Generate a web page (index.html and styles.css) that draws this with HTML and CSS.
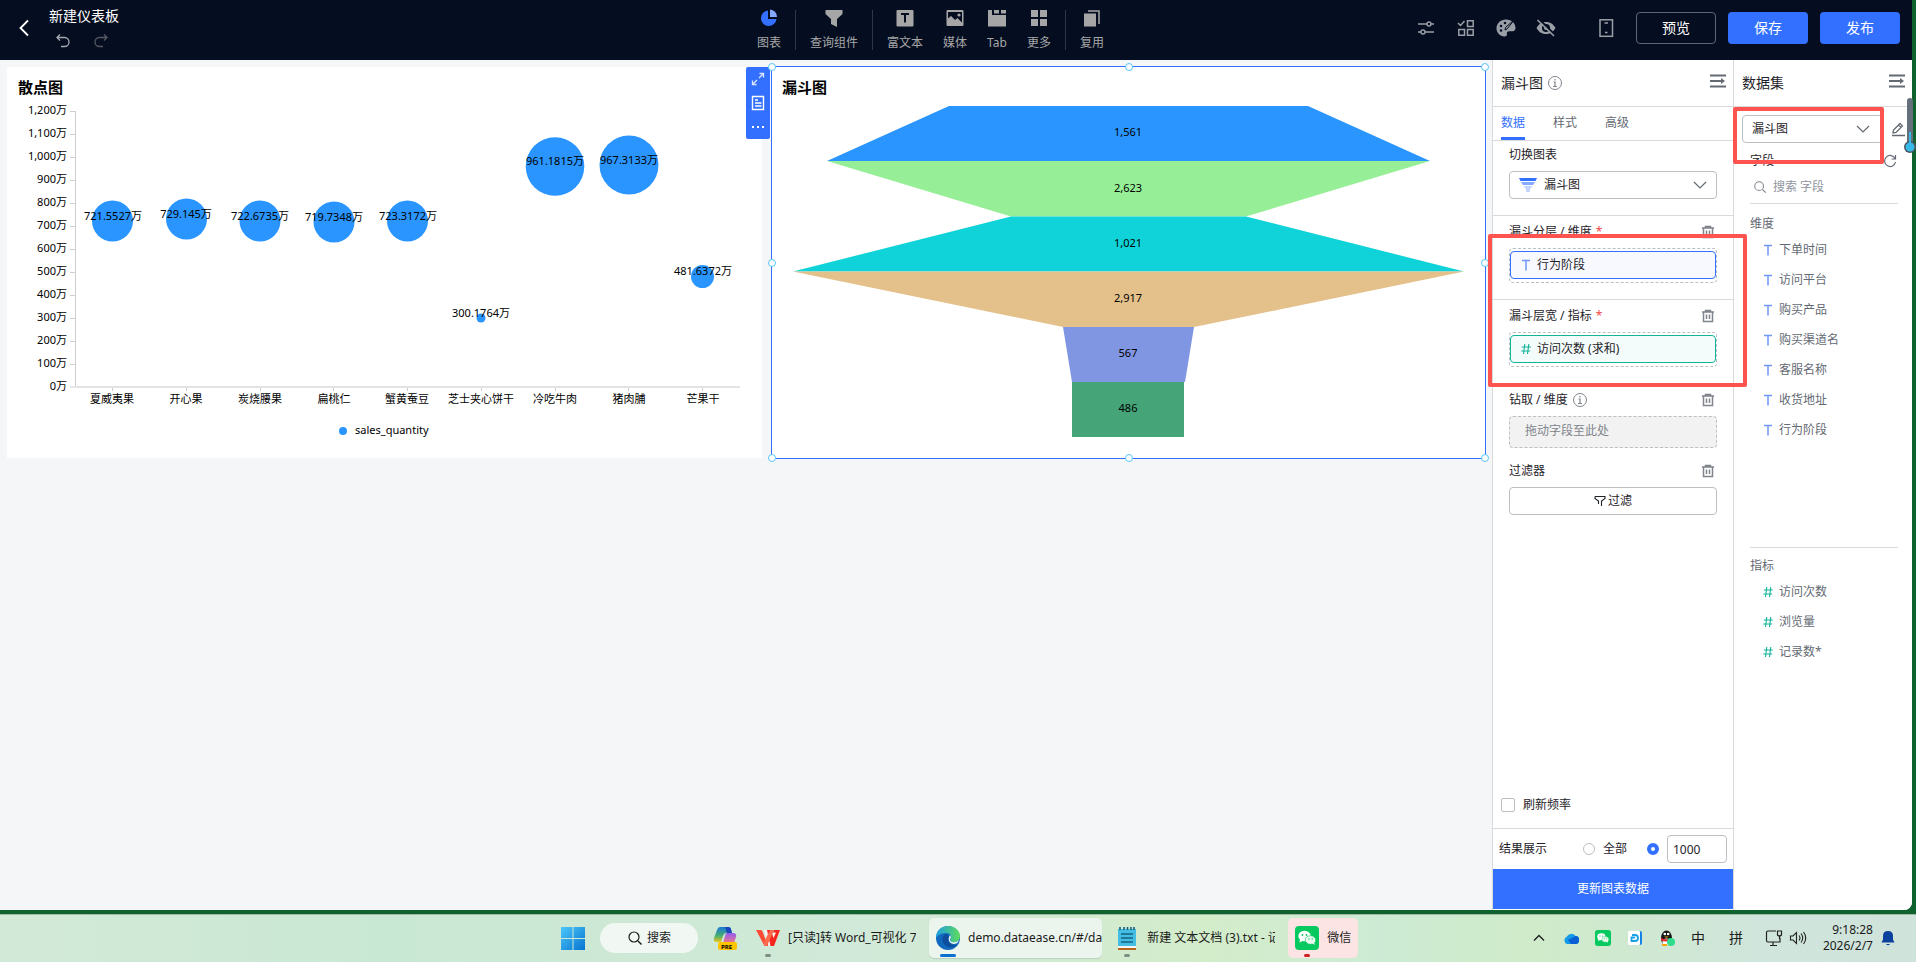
FILE: index.html
```html
<!DOCTYPE html>
<html lang="zh-cn">

<head>
    <meta charset="UTF-8">
    <meta name="viewport" content="width=device-width, initial-scale=1.0">
    <title>新建仪表板</title>
    <link rel="stylesheet" href="styles.css">
</head>

<body>
    <!-- 公用图标 -->
    <svg class="sprite">
        <symbol id="trash" viewBox="0 0 14 14"><path d="M1 3h12M4.500 2.500V1.500h5v1M2.500 3v9.500h9V3M5.500 5.500v4.500M8.500 5.500v4.500" fill="none" stroke="#80848c" stroke-width="1.500"/></symbol>
        <symbol id="fold" viewBox="0 0 16 14"><path d="M0 1.500h16M0 7h11M0 12.500h16" fill="none" stroke="#646a73" stroke-width="2"/><path d="M11 4l4 3-4 3z" fill="#646a73"/></symbol>
        <symbol id="info" viewBox="0 0 16 16"><circle cx="8" cy="8" r="6.500" fill="none" stroke="#80848c"/><path d="M8 4v1.500M6.500 7H8v4.500M6 11.500h4" fill="none" stroke="#80848c" stroke-width="1.200"/></symbol>
        <symbol id="arrow" viewBox="0 0 14 14"><path d="M1 4l6 6 6-6" fill="none" stroke="#646a73" stroke-width="1.200"/></symbol>
        <symbol id="text-field" viewBox="0 0 10 12"><path d="M1 1.500h8M5 1.500v10" fill="none" stroke="#6f96fb" stroke-width="1.500"/></symbol>
        <symbol id="num-field" viewBox="0 0 10 12"><path d="M3.800 1L2.500 11M7.800 1L6.500 11M.8 4h9M.2 8h9" fill="none" stroke="#10b39a" stroke-width="1.100"/></symbol>
        <symbol id="search" viewBox="0 0 16 16"><circle cx="7" cy="7" r="5" fill="none" stroke="currentColor" stroke-width="1.200"/><path d="M11 11l3.500 3.500" stroke="currentColor" stroke-width="1.400"/></symbol>
        <symbol id="wechat" viewBox="0 0 24 24"><rect width="24" height="24" rx="4" fill="#07c95f"/><ellipse cx="9.500" cy="10" rx="6.200" ry="5.200" fill="#fff"/><path d="M5 13l-.5 3.500 4-2z" fill="#fff"/><ellipse cx="15.500" cy="14" rx="5.200" ry="4.300" fill="#e9faef" stroke="#07c95f" stroke-width=".6"/><path d="M17 17l2.500 2-.2-3.500z" fill="#e9faef"/><circle cx="7.500" cy="9" r=".9" fill="#07c95f"/><circle cx="11.500" cy="9" r=".9" fill="#07c95f"/><circle cx="14" cy="13" r=".7" fill="#07c95f"/><circle cx="17.200" cy="13" r=".7" fill="#07c95f"/></symbol>
    </svg>

    <div class="app">
        <header class="header">
            <div class="header-left">
                <button class="back" aria-label="返回">
                    <svg width="10" height="18" viewBox="0 0 10 18"><path d="M9 1.500L1.500 9 9 16.500" fill="none" stroke="#fff" stroke-width="1.800"/></svg>
                </button>
                <div class="name">
                    <h1>新建仪表板</h1>
                    <div class="history">
                        <button aria-label="撤销"><svg width="16" height="16" viewBox="0 0 16 16"><path d="M5 1.500L2 4.500l3 3M2 4.500h7.500a4.500 4.500 0 0 1 0 9H6" fill="none" stroke="#a6a9b0" stroke-width="1.300"/></svg></button>
                        <button aria-label="重做"><svg width="16" height="16" viewBox="0 0 16 16"><path d="M11 1.500l3 3-3 3M14 4.500H6.500a4.500 4.500 0 0 0 0 9H10" fill="none" stroke="#55585f" stroke-width="1.300"/></svg></button>
                    </div>
                </div>
            </div>
            <nav class="tools">
                <button class="tool">
                    <svg viewBox="0 0 18 18"><path d="M8 1.500A7.800 7.800 0 1 0 16.500 10H8z" fill="#3370ff"/><path d="M10 .5A7.500 7.500 0 0 1 17 8h-7z" fill="#85a9ff"/></svg>
                    <span>图表</span>
                </button>
                <i class="split"></i>
                <button class="tool">
                    <svg viewBox="0 0 18 18"><path d="M.5 1h17v4L12 10v8l-6-3v-5L.5 5z" fill="#a6a6a6"/></svg>
                    <span>查询组件</span>
                </button>
                <i class="split"></i>
                <button class="tool">
                    <svg viewBox="0 0 18 18"><rect x=".5" y="1" width="17" height="16.500" rx="1" fill="#a6a6a6"/><path d="M5 5h8M9 5v8.500" stroke="#050e21" stroke-width="2"/></svg>
                    <span>富文本</span>
                </button>
                <button class="tool">
                    <svg viewBox="0 0 18 18"><rect x=".5" y="1" width="17" height="16" rx="1" fill="#a6a6a6"/><path d="M2 14V9.500l3-2.500 4 4 2.500-2 4.500 5V3H2z" fill="#050e21"/><path d="M2 15l0-5 3-2.500 4 4 2.500-1.800 4.500 4V15z" fill="#a6a6a6"/><circle cx="13" cy="6" r="1.600" fill="#a6a6a6"/></svg>
                    <span>媒体</span>
                </button>
                <button class="tool">
                    <svg viewBox="0 0 18 18"><path d="M0 1h4v5h14v11.500H0zM6 1h5v3.500H6zM13 1h5v3.500h-5z" fill="#a6a6a6"/></svg>
                    <span>Tab</span>
                </button>
                <button class="tool">
                    <svg viewBox="0 0 18 18"><path d="M1 1h7v7H1zM10 1h7v7h-7zM1 10h7v7H1zM10 10h7v7h-7z" fill="#a6a6a6"/></svg>
                    <span>更多</span>
                </button>
                <i class="split"></i>
                <button class="tool">
                    <svg viewBox="0 0 18 18"><path d="M1 4.500h12V17.500H1z" fill="#a6a6a6"/><path d="M5 2h11v13" fill="none" stroke="#a6a6a6" stroke-width="1.500"/></svg>
                    <span>复用</span>
                </button>
            </nav>
            <div class="header-right">
                <button class="icon-btn" aria-label="参数"><svg width="20" height="20" viewBox="0 0 20 20"><path d="M2 6h9M15 6h3M2 14h3M9 14h9" stroke="#9a9ea6" stroke-width="1.500"/><circle cx="13" cy="6" r="2" fill="none" stroke="#9a9ea6" stroke-width="1.400"/><circle cx="7" cy="14" r="2" fill="none" stroke="#9a9ea6" stroke-width="1.400"/></svg></button>
                <button class="icon-btn" aria-label="批量操作"><svg width="20" height="20" viewBox="0 0 20 20"><path d="M2 5l2.500 2.500L8.500 3M11.500 2.800h5.700v5.700h-5.700zM2.800 11.500h5.700v5.700H2.800zM11.500 11.500h5.700v5.700h-5.700z" fill="none" stroke="#9a9ea6" stroke-width="1.500"/></svg></button>
                <button class="icon-btn" aria-label="仪表板配置"><svg width="20" height="20" viewBox="0 0 20 20"><path d="M10 1.500C4.500 1.500.5 5.500.5 10.300c0 4.500 3.500 8.200 8 8.200 2 0 2.700-1 2.400-2.500-.3-1.700.4-2.700 2.300-2.700h3.300c2 0 3-1.500 3-3.300 0-5-4.300-8.500-9.500-8.500z" fill="#9a9ea6"/><g fill="#050e21"><circle cx="5" cy="8" r="1.300"/><circle cx="9" cy="5" r="1.300"/><circle cx="5" cy="12.500" r="1.300"/></g><path d="M19 1l-8 10-2 1 .5-2.500z" fill="#9a9ea6" stroke="#050e21"/></svg></button>
                <button class="icon-btn" aria-label="隐藏"><svg width="20" height="20" viewBox="0 0 20 20"><path d="M.5 10C3 5.500 6.500 4 10 4s7 1.500 9.500 6c-2.500 4.500-6 6-9.500 6S3 14.500.5 10z" fill="#9a9ea6"/><circle cx="10" cy="10" r="4" fill="#050e21"/><circle cx="10" cy="10" r="2" fill="#9a9ea6"/><path d="M3 1l16 16" stroke="#050e21" stroke-width="2"/><path d="M1.500 2l16.500 16" stroke="#9a9ea6" stroke-width="1.600"/></svg></button>
                <button class="icon-btn phone" aria-label="移动端"><svg width="20" height="20" viewBox="0 0 20 20"><rect x="4" y="1.800" width="12.500" height="16.500" fill="none" stroke="#9a9ea6" stroke-width="1.500"/><path d="M8.500 5h3.500M9 14.500h2.500" stroke="#9a9ea6" stroke-width="1.500"/></svg></button>
                <button class="btn plain">预览</button>
                <button class="btn">保存</button>
                <button class="btn">发布</button>
            </div>
        </header>

        <div class="main">
            <main class="canvas">
                <section class="card">
                    <h2>散点图</h2>
                    <svg class="chart" viewBox="0 0 755 359">
                        <g stroke="#cfcfcf">
                            <path d="M68.500 12v276M63 12.500h5M63 35.500h5M63 58.500h5M63 81.500h5M63 104.500h5M63 127.500h5M63 150.500h5M63 173.500h5M63 196.500h5M63 219.500h5M63 242.500h5M63 265.500h5M63 288h5" fill="none"/>
                            <path d="M105.500 288v4M179.500 288v4M253.500 288v4M326.500 288v4M400.500 288v4M474.500 288v4M548.500 288v4M621.500 288v4M695.500 288v4" fill="none"/>
                        </g>
                        <path d="M68 288h665" stroke="#e3e3e3" stroke-width="2"/>
                        <g text-anchor="end">
                            <text x="60" y="15">1,200万</text>
                            <text x="60" y="38">1,100万</text>
                            <text x="60" y="61">1,000万</text>
                            <text x="60" y="84">900万</text>
                            <text x="60" y="107">800万</text>
                            <text x="60" y="130">700万</text>
                            <text x="60" y="153">600万</text>
                            <text x="60" y="176">500万</text>
                            <text x="60" y="199">400万</text>
                            <text x="60" y="222">300万</text>
                            <text x="60" y="245">200万</text>
                            <text x="60" y="268">100万</text>
                            <text x="60" y="291">0万</text>
                        </g>
                        <g fill="#2a95ff">
                            <circle cx="105.500" cy="122" r="20.500"/>
                            <circle cx="179.500" cy="120" r="20.500"/>
                            <circle cx="253" cy="122" r="20.500"/>
                            <circle cx="327" cy="123" r="20.500"/>
                            <circle cx="400.500" cy="122" r="20.500"/>
                            <circle cx="474" cy="219" r="4.500"/>
                            <circle cx="548" cy="67.500" r="29.300"/>
                            <circle cx="622" cy="66" r="29.500"/>
                            <circle cx="695.500" cy="177.500" r="11.500"/>
                        </g>
                        <g text-anchor="middle">
                            <text x="106" y="121">721.5527万</text>
                            <text x="179" y="119">729.145万</text>
                            <text x="253" y="121">722.6735万</text>
                            <text x="327" y="122">719.7348万</text>
                            <text x="401" y="121">723.3172万</text>
                            <text x="474" y="218">300.1764万</text>
                            <text x="548" y="66">961.1815万</text>
                            <text x="622" y="65">967.3133万</text>
                            <text x="696" y="176">481.6372万</text>
                            <text x="105" y="304">夏威夷果</text>
                            <text x="179" y="304">开心果</text>
                            <text x="253" y="304">炭烧腰果</text>
                            <text x="327" y="304">扁桃仁</text>
                            <text x="400" y="304">蟹黄蚕豆</text>
                            <text x="474" y="304">芝士夹心饼干</text>
                            <text x="548" y="304">冷吃牛肉</text>
                            <text x="622" y="304">猪肉脯</text>
                            <text x="696" y="304">芒果干</text>
                        </g>
                        <circle cx="336" cy="332" r="4" fill="#2a95ff"/>
                        <text x="348" y="335">sales_quantity</text>
                    </svg>
                </section>

                <section class="card selected">
                    <h2>漏斗图</h2>
                    <svg class="chart" viewBox="0 0 713 359">
                        <path d="M177 7h359l122 55H55z" fill="#2a95ff"/>
                        <path d="M55 62h603l-184 55.500H239z" fill="#96ef96"/>
                        <path d="M239 117.500h235l218 55H21z" fill="#0fd3d8"/>
                        <path d="M21 172.500h671l-270 55.500H291z" fill="#e4c08b"/>
                        <path d="M291 228h131l-9 55H300z" fill="#8096e2"/>
                        <path d="M300 283h112v55H300z" fill="#45a578"/>
                        <g text-anchor="middle">
                            <text x="356" y="37">1,561</text>
                            <text x="356" y="93">2,623</text>
                            <text x="356" y="148">1,021</text>
                            <text x="356" y="203">2,917</text>
                            <text x="356" y="258">567</text>
                            <text x="356" y="313">486</text>
                        </g>
                    </svg>
                    <div class="card-bar">
                        <button aria-label="放大"><svg width="14" height="14" viewBox="0 0 14 14"><path d="M8.500 1.500h4v4M12.500 1.500l-4.500 4.500M5.500 12.500h-4v-4M1.500 12.500L6 8" fill="none" stroke="#dbe5ff" stroke-width="1.300"/></svg></button>
                        <button aria-label="查看数据"><svg width="14" height="16" viewBox="0 0 14 16"><path d="M1.500 1.500h11v13h-11zM4 5h3M4 8h6.500M4 11h6.500" fill="none" stroke="#fff" stroke-width="1.400"/></svg></button>
                        <button aria-label="更多"><svg width="14" height="14" viewBox="0 0 14 14"><path d="M1 6h2v2H1zM6 6h2v2H6zM11 6h2v2h-2z" fill="#fff"/></svg></button>
                    </div>
                    <i class="dot tl"></i><i class="dot tc"></i><i class="dot tr"></i>
                    <i class="dot ml"></i><i class="dot mr"></i>
                    <i class="dot bl"></i><i class="dot bc"></i><i class="dot br"></i>
                </section>
            </main>

            <aside class="panel editor">
                <div class="panel-head">
                    <h3>漏斗图</h3>
                    <svg width="16" height="16"><use href="#info"/></svg>
                    <button class="fold" aria-label="收起"><svg width="16" height="14"><use href="#fold"/></svg></button>
                </div>
                <div class="tabs">
                    <button class="active">数据</button>
                    <button>样式</button>
                    <button>高级</button>
                </div>
                <div class="group first">
                    <div class="label"><label for="chartType">切换图表</label></div>
                    <div class="select">
                        <svg width="18" height="16" viewBox="0 0 18 16"><path d="M0 1h18l-1.500 3h-15z" fill="#3370ff"/><path d="M2 5h14l-2 3H4z" fill="#85a9ff"/><path d="M4.500 9h9l-2.500 3v3H7v-3z" fill="#c2d4ff"/></svg>
                        <select id="chartType">
                            <option>漏斗图</option>
                        </select>
                        <svg class="arrow" width="14" height="14"><use href="#arrow"/></svg>
                    </div>
                </div>
                <div class="group">
                    <div class="label">漏斗分层 / 维度 <em>*</em><button aria-label="清空维度"><svg width="14" height="14"><use href="#trash"/></svg></button></div>
                    <div class="drop"><div class="chip"><svg width="10" height="12"><use href="#text-field"/></svg>行为阶段</div></div>
                    <div class="mark"></div>
                </div>
                <div class="group">
                    <div class="label">漏斗层宽 / 指标 <em>*</em><button aria-label="清空指标"><svg width="14" height="14"><use href="#trash"/></svg></button></div>
                    <div class="drop"><div class="chip green"><svg width="10" height="12"><use href="#num-field"/></svg>访问次数 (求和)</div></div>
                </div>
                <div class="group plain">
                    <div class="label">钻取 / 维度<svg width="16" height="16"><use href="#info"/></svg><button aria-label="清空钻取"><svg width="14" height="14"><use href="#trash"/></svg></button></div>
                    <div class="drop empty">拖动字段至此处</div>
                </div>
                <div class="group plain">
                    <div class="label">过滤器<button aria-label="清空过滤器"><svg width="14" height="14"><use href="#trash"/></svg></button></div>
                    <button class="filter"><svg width="12" height="12" viewBox="0 0 12 12"><path d="M1 1.500h10v2L7.500 6v5M4.500 9V6L1 3.500v-2" fill="none" stroke="#1f2329" stroke-width="1.100"/></svg>过滤</button>
                </div>
                <div class="panel-foot">
                    <div class="refresh"><input type="checkbox" id="refresh"><label for="refresh">刷新频率</label></div>
                    <div class="result">
                        <span>结果展示</span>
                        <input type="radio" name="result" id="all"><label for="all">全部</label>
                        <input type="radio" name="result" class="limit" aria-label="自定义条数" checked>
                        <input type="text" value="1000" aria-label="条数">
                    </div>
                    <button class="update">更新图表数据</button>
                </div>
            </aside>

            <aside class="panel dataset">
                <div class="panel-head">
                    <h3>数据集</h3>
                    <button class="fold" aria-label="收起"><svg width="16" height="14"><use href="#fold"/></svg></button>
                </div>
                <div class="source">
                    <div class="select">
                        <select aria-label="数据集">
                            <option>漏斗图</option>
                        </select>
                        <svg class="arrow" width="14" height="14"><use href="#arrow"/></svg>
                    </div>
                    <button aria-label="编辑数据集"><svg width="16" height="16" viewBox="0 0 16 16"><path d="M3 12l.5-3L10 2.500l2.500 2.500L6 11.500zM8.500 4L11 6.500M2 14.500h13" fill="none" stroke="#646a73" stroke-width="1.300"/></svg></button>
                    <div class="mark"></div>
                </div>
                <div class="fields-head">
                    <span>字段</span>
                    <button aria-label="刷新"><svg width="14" height="14" viewBox="0 0 14 14"><path d="M12 4.500A5.500 5.500 0 1 0 12.500 8M12.500 1v4h-4" fill="none" stroke="#646a73" stroke-width="1.200"/></svg></button>
                </div>
                <div class="search">
                    <svg width="14" height="14"><use href="#search"/></svg>
                    <input type="text" placeholder="搜索 字段" aria-label="搜索字段">
                </div>
                <div class="fields">
                    <h4>维度</h4>
                    <ul>
                        <li><svg width="10" height="12"><use href="#text-field"/></svg>下单时间</li>
                        <li><svg width="10" height="12"><use href="#text-field"/></svg>访问平台</li>
                        <li><svg width="10" height="12"><use href="#text-field"/></svg>购买产品</li>
                        <li><svg width="10" height="12"><use href="#text-field"/></svg>购买渠道名</li>
                        <li><svg width="10" height="12"><use href="#text-field"/></svg>客服名称</li>
                        <li><svg width="10" height="12"><use href="#text-field"/></svg>收货地址</li>
                        <li><svg width="10" height="12"><use href="#text-field"/></svg>行为阶段</li>
                    </ul>
                </div>
                <div class="fields quota">
                    <h4>指标</h4>
                    <ul>
                        <li><svg width="10" height="12"><use href="#num-field"/></svg>访问次数</li>
                        <li><svg width="10" height="12"><use href="#num-field"/></svg>浏览量</li>
                        <li><svg width="10" height="12"><use href="#num-field"/></svg>记录数*</li>
                    </ul>
                </div>
                <svg class="gauge" width="12" height="56" viewBox="0 0 12 56"><path d="M3 3q0-3 3-3t3 3v42H3z" fill="#646f7b"/><circle cx="6" cy="49" r="6" fill="#4b5560"/><path d="M5 34h2v12H5z" fill="#36b9e6"/><circle cx="6" cy="49" r="4.500" fill="#36b9e6"/></svg>
            </aside>
        </div>
    </div>

    <footer class="taskbar">
        <div class="tasks">
            <button class="start" aria-label="开始"><svg width="24" height="24" viewBox="0 0 24 24"><defs><linearGradient id="win" x2="1" y2="1"><stop offset="0" stop-color="#4cc8fb"/><stop offset="1" stop-color="#0673cf"/></linearGradient></defs><path d="M0 1h11.500v11H0zM12.500 1H24v11H12.500zM0 13h11.500v11H0zM12.500 13H24v11H12.500z" fill="url(#win)"/></svg></button>
            <button class="find"><svg width="16" height="16"><use href="#search"/></svg>搜索</button>
            <button class="copilot" aria-label="Copilot"><svg width="24" height="24" viewBox="0 0 24 24"><defs><linearGradient id="cp1" x2="0" y2="1"><stop offset="0" stop-color="#1b78d8"/><stop offset=".6" stop-color="#4bb06d"/><stop offset="1" stop-color="#f0c419"/></linearGradient><linearGradient id="cp2" x2="0" y2="1"><stop offset="0" stop-color="#8f5cf0"/><stop offset="1" stop-color="#f2768c"/></linearGradient></defs><path d="M7 1h8q3 0 3 3l1 3h-5q-3 0-4 3l-2 6H4q-4 0-3-4L4 4q1-3 3-3z" fill="url(#cp1)"/><path d="M12 1h4q2 0 3 6h-5z" fill="#1946bd"/><path d="M14 7h6q4 0 3 4l-2 6H10l2-7q.5-3 2-3z" fill="url(#cp2)"/><rect x="5" y="16" width="19" height="8" rx="2" fill="#fdc400"/><text class="pre" x="8" y="23">PRE</text></svg></button>
            <button class="task"><svg width="24" height="24" viewBox="0 0 24 24"><path d="M0 4h5q1 0 1.500 1.500L10 15l1.500-4 2.500 6-2 3H8.500z" fill="#ff4a35"/><path d="M8 4h4l3 9 2.500-6h3.500l-5 13h-3.500z" fill="#fff3ef"/><path d="M11 4h4l2.500 8L20 6.500h-3L18 4h6l-6 16h-3.500z" fill="#f5261f"/><path d="M14 4h4l-7 16H8.500l-1-3z" fill="#ff6a4d"/></svg><span>[只读]转 Word_可视化 7</span><i></i></button>
            <button class="task current"><svg width="24" height="24" viewBox="0 0 24 24"><defs><linearGradient id="edge" x2="1" y2="0"><stop offset="0" stop-color="#1b9de2"/><stop offset="1" stop-color="#5fdc5a"/></linearGradient></defs><circle cx="12" cy="12" r="12" fill="#1268bd"/><path d="M0 12C0 5 5 0 12 0s12 5 12 10c0 4-3 6-6 6-4 0-4-2-3-4 1-3-2-5-5-5-5 0-9 3-10 5z" fill="url(#edge)"/><path d="M10 8c-4 1-5 7-1 11 3 3 9 3 12 0-4 1-9-1-9-6 0-1 1-2 1-3z" fill="#0d4d9a"/><path d="M14 9c2 2 0 4 0 5 1 3 6 3 9 0-1 3-3 4-5 4-4 0-7-4-4-9z" fill="#e8f4ec"/></svg><span>demo.dataease.cn/#/da</span><i></i></button>
            <button class="task"><svg width="24" height="24" viewBox="0 0 24 24"><path d="M3 3h18v18H3z" fill="#43bde2"/><path d="M3 21h18v3H3z" fill="#b5651d"/><path d="M3 20h18v2H3z" fill="#f4f4f4"/><path d="M5 1v3M9 1v3M12.500 1v3M16 1v3M19 1v3" stroke="#17627e" stroke-width="1.600"/><path d="M6 8h12M6 12h12M6 16h12" stroke="#126484" stroke-width="1.400"/></svg><span>新建 文本文档 (3).txt - 记</span><i></i></button>
            <button class="task alert"><svg width="24" height="24"><use href="#wechat"/></svg><span>微信</span><i></i></button>
        </div>
        <div class="tray">
            <button aria-label="显示隐藏的图标"><svg width="16" height="16" viewBox="0 0 16 16"><path d="M3 10.500l5-5 5 5" fill="none" stroke="#222" stroke-width="1.400"/></svg></button>
            <svg width="16" height="16" viewBox="0 0 16 16"><path d="M4 14a4 4 0 0 1 0-7.500A5 5 0 0 1 12.500 6 4 4 0 0 1 12 14z" fill="#139be8"/><path d="M8 14l-3-4 7.500-4A4 4 0 0 1 12 14z" fill="#0a5fd3"/></svg>
            <svg width="16" height="16"><use href="#wechat"/></svg>
            <svg width="16" height="16" viewBox="0 0 16 16"><rect x="1" y="1" width="14" height="14" rx="2" fill="#1682e6"/><rect x="1" y="1" width="12" height="14" rx="1" fill="#fff"/><path d="M5 5h3q3 0 3 3t-3 3H4.500V7.500H8" fill="none" stroke="#18a0e8" stroke-width="1.800"/></svg>
            <svg width="16" height="16" viewBox="0 0 16 16"><ellipse cx="7.500" cy="8" rx="5.500" ry="7.500" fill="#151515"/><ellipse cx="7.500" cy="12" rx="4" ry="3.500" fill="#fff"/><path d="M2 8q5.500 2.500 11 0v2.500q-5.500 2-11 0z" fill="#e3262e"/><circle cx="5.800" cy="4" r="1.300" fill="#fff"/><circle cx="9.200" cy="4" r="1.300" fill="#fff"/><path d="M5 6.500h5l-2.500 1.300z" fill="#f7a600"/><path d="M3 15h5" stroke="#f7a600" stroke-width="2"/><circle cx="12" cy="12" r="4" fill="#2fdc8b"/></svg>
            <span class="ime">中</span>
            <span class="ime pin">拼</span>
            <svg class="net" width="18" height="16" viewBox="0 0 18 16"><path d="M11 1H3Q1.500 1 1.500 2.500v8Q1.500 12 3 12h12V8M8 12v3M5 15.500h7M12.500 1h4v4q-2 2-4 0zM14.500 6v3" fill="none" stroke="#222" stroke-width="1.200"/></svg>
            <svg width="18" height="16" viewBox="0 0 18 16"><path d="M1.500 6v4h2.500l3.500 3.500v-11L4 6zM10 5.500q2 2.500 0 5M12 3.500q3.500 4.500 0 9M14.500 2q4.500 6 0 12" fill="none" stroke="#222" stroke-width="1.100"/></svg>
            <div class="clock">9:18:28<br>2026/2/7</div>
            <svg width="14" height="16" viewBox="0 0 14 16"><path d="M7 1q5 0 5 5v3.500l1.500 3H.5L2 9.500V6q0-5 5-5z" fill="#0b409c"/><path d="M5 14h4q-2 2.500-4 0z" fill="#0b409c"/></svg>
        </div>
    </footer>
</body>

</html>
```
FILE: styles.css
```css
* {
    padding: 0;
    margin: 0;
    list-style: none;
    box-sizing: border-box;
}

body {
    height: 100vh;
    display: flex;
    flex-direction: column;
    gap: 4px;
    overflow: hidden;
    background-color: #0f612e;
    color: #1f2329;
    font: 12px/20px "Noto Sans", "Noto Sans CJK SC", sans-serif;
}

button,
input,
select {
    font: inherit;
    color: inherit;
    border: 0;
    background: none;
}

button {
    cursor: pointer;
}

svg {
    display: block;
    flex: none;
}

.sprite {
    position: absolute;
    width: 0;
    height: 0;
}

.app {
    flex: 1;
    min-height: 0;
    margin-right: 4px;
    display: flex;
    flex-direction: column;
    border-radius: 0 0 8px 0;
    background-color: #f5f6f7;
}

/* 顶部 */
.header {
    height: 60px;
    flex: none;
    display: grid;
    grid-template-columns: 757fr auto 808fr;
    align-items: center;
    background-color: #050e21;
    color: #fff;
}

.header-left {
    display: flex;
    align-items: center;
    gap: 20px;
    padding: 0 0 4px 19px;
}

.name {
    padding-bottom: 2px;
}

.name h1 {
    font-size: 14px;
    line-height: 20px;
    font-weight: normal;
}

.history {
    display: flex;
    gap: 22px;
    padding: 7px 6px 0;
}

.tools {
    display: flex;
    align-items: center;
    gap: 20px;
    color: #a6a6a6;
}

.tool {
    display: flex;
    flex-direction: column;
    align-items: center;
    gap: 7px;
}

.tool svg {
    width: 18px;
    height: 18px;
}

.tool span {
    line-height: 18px;
}

.split {
    width: 1px;
    height: 40px;
    margin: 0 -6px;
    background-color: #2f3644;
}

.header-right {
    display: flex;
    align-items: center;
    justify-content: flex-end;
    padding: 0 12px 4px 0;
}

.icon-btn {
    margin-right: 20px;
}

.phone {
    margin-left: 20px;
}

.btn {
    width: 80px;
    height: 32px;
    border-radius: 4px;
    background-color: #3370ff;
    font-size: 14px;
}

.btn + .btn {
    margin-left: 12px;
}

.btn.plain {
    border: 1px solid #5f6571;
    background-color: transparent;
}

.main {
    flex: 1;
    min-height: 0;
    display: flex;
}

/* 画布 */
.canvas {
    flex: 1;
    min-width: 0;
    display: grid;
    grid-template-columns: 755fr 715fr;
    align-items: start;
    gap: 9px;
    padding: 6px 6px 0 7px;
}

.card {
    position: relative;
    margin-top: 1px;
    background-color: #fff;
}

.card.selected {
    margin-top: 0;
    border: 1px solid #3370ff;
}

.card h2 {
    padding: 9px 11px 1px;
    font-size: 15px;
    line-height: 22px;
    color: #000;
}

.card.selected h2 {
    padding-left: 10px;
}

.chart {
    width: 100%;
    height: auto;
}

.chart text {
    font-size: 11px;
}

.card-bar {
    position: absolute;
    top: 0;
    left: -26px;
    width: 24px;
    height: 72px;
    display: flex;
    flex-direction: column;
    justify-content: space-around;
    align-items: center;
    border-radius: 2px;
    background-color: #3370ff;
}

.dot {
    position: absolute;
    width: 8px;
    height: 8px;
    margin: -4px;
    border: 1px solid #59c7f9;
    border-radius: 50%;
    background-color: #fff;
}

.tl, .tc, .tr { top: 0; }
.ml, .mr { top: 50%; }
.bl, .bc, .br { top: 100%; }
.tl, .ml, .bl { left: 0; }
.tc, .bc { left: 50%; }
.tr, .mr, .br { left: 100%; }

/* 右侧面板 */
.panel {
    display: flex;
    flex-direction: column;
    background-color: #fff;
    border-left: 1px solid #d9dadc;
    flex: none;
}

.editor {
    width: 241px;
}

.dataset {
    position: relative;
    width: 179px;
    border-radius: 0 0 8px 0;
}

.panel-head {
    height: 47px;
    flex: none;
    display: flex;
    align-items: center;
    gap: 4px;
    padding: 0 7px 0 8px;
    border-bottom: 1px solid #d9dadc;
}

.panel-head h3 {
    font-size: 14px;
    font-weight: normal;
}

.fold {
    margin: 0 0 5px auto;
}

.tabs {
    height: 34px;
    flex: none;
    display: flex;
    gap: 28px;
    padding-left: 8px;
    border-bottom: 1px solid #d9dadc;
    color: #646a73;
}

.tabs button {
    padding-top: 2px;
    border-bottom: 3px solid transparent;
}

.tabs .active {
    color: #3370ff;
    border-color: #3370ff;
}

.group {
    position: relative;
    display: flex;
    flex-direction: column;
    gap: 6px;
    padding: 6px 16px 16px;
    border-bottom: 1px solid #d9dadc;
}

.group.first {
    padding-top: 4px;
}

.group.plain {
    padding-bottom: 7px;
    border-bottom: 0;
}

.label {
    display: flex;
    align-items: center;
    gap: 4px;
}

.label em {
    color: #f54a45;
    font-style: normal;
}

.label button {
    margin: 0 2px 0 auto;
}

.select {
    position: relative;
    display: flex;
    align-items: center;
    height: 28px;
    padding: 0 9px;
    gap: 7px;
    border: 1px solid #bbbfc4;
    border-radius: 4px;
    background-color: #fff;
}

.select select {
    flex: 1;
    appearance: none;
}

.drop {
    padding: 2px 0 3px;
    border: 1px dashed #bbbfc4;
    border-radius: 4px;
}

.drop.empty {
    padding: 4px 15px 6px;
    background-color: #f2f2f2;
    color: #80848c;
}

.chip {
    height: 28px;
    display: flex;
    align-items: center;
    gap: 6px;
    padding-left: 10px;
    border: 1px solid #3370ff;
    border-radius: 4px;
    background-color: #f7f9ff;
}

.chip.green {
    border-color: #12b59c;
    background-color: #f4fcfb;
}

/* 红色标注框 */
.mark {
    position: absolute;
    z-index: 10;
    border: 4px solid #ff5350;
    border-radius: 2px;
    pointer-events: none;
}

.group .mark {
    top: 18px;
    left: -5px;
    right: -14px;
    height: 153px;
}

.source .mark {
    top: 0;
    left: -1px;
    width: 151px;
    height: 57px;
}

.filter {
    height: 28px;
    display: flex;
    align-items: center;
    justify-content: center;
    gap: 2px;
    border: 1px solid #bbbfc4;
    border-radius: 4px;
}

.panel-foot {
    margin-top: auto;
    padding-bottom: 1px;
}

.refresh {
    display: flex;
    align-items: center;
    gap: 8px;
    padding: 0 8px 13px;
}

input[type="checkbox"],
input[type="radio"] {
    appearance: none;
    width: 14px;
    height: 14px;
    border: 1px solid #bbbfc4;
    border-radius: 2px;
}

input[type="radio"] {
    width: 12px;
    height: 12px;
    border-radius: 50%;
}

input[type="radio"]:checked {
    border: 4px solid #3370ff;
}

.result {
    height: 41px;
    display: flex;
    align-items: center;
    padding: 0 6px;
    border-top: 1px solid #d9dadc;
}

.result span {
    margin-right: auto;
}

.result label {
    margin: 0 20px 0 8px;
}

.result .limit {
    margin-right: 8px;
}

.result input[type="text"] {
    width: 60px;
    height: 28px;
    padding-left: 5px;
    border: 1px solid #bbbfc4;
    border-radius: 4px;
}

.update {
    width: 100%;
    height: 40px;
    background-color: #3370ff;
    color: #fff;
}

/* 数据集 */
.source {
    position: relative;
    display: flex;
    align-items: center;
    gap: 7px;
    padding: 8px 6px 6px 8px;
}

.source .select {
    flex: 1;
    min-width: 0;
    padding-right: 12px;
}

.source select {
    min-width: 0;
}

.fields-head {
    display: flex;
    align-items: center;
    justify-content: space-between;
    padding: 2px 15px 0 16px;
}

.search {
    display: flex;
    align-items: center;
    gap: 6px;
    margin: 0 14px 0 16px;
    padding: 6px 3px;
    border-bottom: 1px solid #d9dadc;
    color: #80848c;
}

.search input {
    min-width: 0;
    flex: 1;
    outline: 0;
}

.search input::placeholder {
    color: #8f959e;
}

.fields {
    margin: 0 14px 0 16px;
    padding-top: 10px;
    color: #646a73;
}

.fields h4 {
    margin-bottom: 1px;
    font-weight: normal;
}

.fields li {
    height: 30px;
    display: flex;
    align-items: center;
    gap: 6px;
    padding-left: 13px;
}

.quota {
    margin-top: 102px;
    padding-top: 8px;
    border-top: 1px solid #d9dadc;
}

.gauge {
    position: absolute;
    top: 38px;
    right: -4px;
}

/* 任务栏 */
.taskbar {
    height: 48px;
    flex: none;
    display: flex;
    justify-content: space-between;
    padding: 0 21px 0 561px;
    border-top: 1px solid #9fb9a5;
    background: linear-gradient(90deg, #d3e9d8, #c9e8d3 20%, #d1e9d8 45%, #d3ecca 63%, #cdebd4 72%, #cfebc9 80%, #d0e5dc 92%, #cfe3da);
    color: #1b1b1b;
}

.tasks,
.tray {
    display: flex;
    align-items: center;
    padding-bottom: 1px;
}

.find {
    width: 98px;
    height: 30px;
    display: flex;
    align-items: center;
    justify-content: center;
    gap: 4px;
    margin: 0 15px;
    border-radius: 15px;
    background-color: #f1f8f3;
}

.copilot {
    margin-right: 12px;
}

.pre {
    font-size: 6px;
    font-weight: bold;
}

.task {
    position: relative;
    height: 40px;
    display: flex;
    align-items: center;
    gap: 8px;
    padding: 0 7px;
    margin-right: 6px;
    border-radius: 5px;
}

.task span {
    max-width: 128px;
    overflow: hidden;
    white-space: nowrap;
}

.task i {
    position: absolute;
    left: 16px;
    bottom: 1px;
    width: 6px;
    height: 3px;
    border-radius: 2px;
    background-color: #808f85;
}

.task.current {
    padding-right: 0;
    background-color: #ebf5ee;
    box-shadow: 0 1px 1px #b9cfc0;
}

.task.current span {
    max-width: none;
}

.task.current i {
    left: 11px;
    width: 16px;
    background-color: #0b6fd0;
}

.task.alert {
    background-color: #fce4e5;
}

.task.alert i {
    background-color: #cc2222;
}

.tray {
    gap: 16px;
}

.ime {
    font-size: 14px;
}

.pin {
    margin-left: 8px;
}

.tray .net {
    margin: 0 -10px 0 6px;
}

.clock {
    margin-right: -8px;
    line-height: 16px;
    text-align: right;
}
```
